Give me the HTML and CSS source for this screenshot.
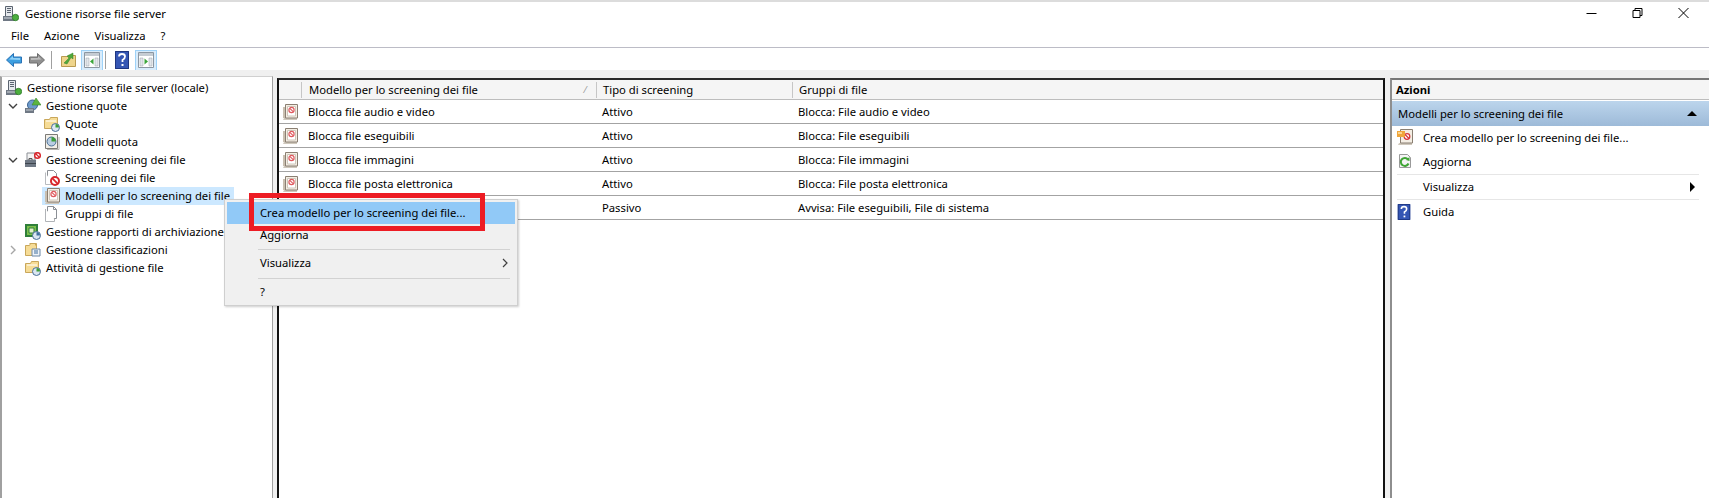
FILE: index.html
```html
<!DOCTYPE html>
<html lang="it">
<head>
    <meta charset="UTF-8">
    <title>Gestione risorse file server</title>
    <link rel="stylesheet" href="styles.css">
</head>
<body>
    <svg class="sprite" aria-hidden="true">
        <symbol id="i-server" viewBox="0 0 16 16">
            <path d="M2.500 .5h7v10h-7z" fill="#e6e9ed" stroke="#5b6470"/>
            <path d="M4 2.500h4M4 4.500h4M4 6.500h4" stroke="#5b6470"/>
            <path d="M0 10h12v5H0z" fill="#6f7884"/>
            <path d="M1 11.500h10v1H1z" fill="#d5d9de"/>
            <circle cx="12.500" cy="11.500" r="3.200" fill="#4cae3f" stroke="#2c7a26" stroke-width=".8"/>
        </symbol>
        <symbol id="i-quota" viewBox="0 0 16 16">
            <circle cx="7.500" cy="7" r="5" fill="#6d9bcc" stroke="#3b6390"/>
            <path d="M0 10h9v5H0z" fill="#6f7884"/>
            <path d="M1 11.500h7v1H1z" fill="#c9ced5"/>
            <path d="M11 0l5 7H7z" fill="#5db43f" stroke="#3b8a2b" stroke-width=".6"/>
        </symbol>
        <symbol id="i-folder-pie" viewBox="0 0 16 16">
            <path d="M.5 3.500h5l1-2h7v11H.5z" fill="#f6dc96" stroke="#c9a75a"/>
            <path d="M2 5h10" stroke="#fff"/>
            <circle cx="11.500" cy="11.500" r="4" fill="#dbe6f2" stroke="#4a6f96"/>
            <path d="M11.500 11.500V8a3.500 3.500 0 0 1 3.500 3.500z" fill="#3f9e3a"/>
        </symbol>
        <symbol id="i-page-pie" viewBox="0 0 16 16">
            <path d="M1.500 .5h12v14h-12z" fill="#f2efe8" stroke="#7c7a76"/>
            <path d="M3 15.500h12V3" fill="none" stroke="#b5b3ae"/>
            <circle cx="7.500" cy="7.500" r="4.500" fill="#b9cde2" stroke="#4a6f96"/>
            <path d="M7.500 7.500V3a4.500 4.500 0 0 1 4.500 4.500z" fill="#3f9e3a"/>
        </symbol>
        <symbol id="i-case-ban" viewBox="0 0 16 16">
            <path d="M2 1h8v7H2z" fill="#f4f4f4" stroke="#8b8f95"/>
            <path d="M4 8V6.500h3V8" fill="none" stroke="#555"/>
            <path d="M0 8h11v7H0z" fill="#6f7884"/>
            <path d="M0 11h11v1H0z" fill="#3e454e"/>
            <circle cx="12.500" cy="3.500" r="2.800" fill="#fff" stroke="#d8262c" stroke-width="1.500"/>
            <path d="M10.500 1.500l4 4" stroke="#d8262c" stroke-width="1.300"/>
        </symbol>
        <symbol id="i-page-ban" viewBox="0 0 16 16">
            <path d="M3.500 .5h6l3 3v8h-9z" fill="#fff" stroke="#8b8f95"/>
            <path d="M1.500 2.500v12h7" fill="#fff" stroke="#b9bcc0"/>
            <circle cx="11" cy="11" r="4" fill="#fff" stroke="#d8262c" stroke-width="2"/>
            <path d="M8.200 8.200l5.600 5.600" stroke="#d8262c" stroke-width="1.800"/>
        </symbol>
        <symbol id="i-template" viewBox="0 0 16 16">
            <path d="M2 14h13v2H1z" fill="#cfc8bc"/>
            <path d="M1 3h2v11H1z" fill="#c9bfb0"/>
            <path d="M3.500 .5h12v13.500h-12z" fill="#f4eee4" stroke="#8a7f72"/>
            <path d="M5.500 2.500h8v9.500h-8z" fill="#fff" stroke="#cfc7ba"/>
            <circle cx="9.500" cy="6" r="2.600" fill="#fff" stroke="#df5a5e" stroke-width="1.200"/>
            <path d="M7.800 4.300l3.400 3.400" stroke="#df5a5e" stroke-width="1.100"/>
        </symbol>
        <symbol id="i-pages" viewBox="0 0 16 16">
            <path d="M3.500 .5h6l3 3v9h-9z" fill="#fff" stroke="#8b8f95"/>
            <path d="M1.500 3v12.500h9V13" fill="#fff" stroke="#b0b3b7"/>
            <path d="M9.500 .5v3h3" fill="none" stroke="#8b8f95"/>
        </symbol>
        <symbol id="i-report" viewBox="0 0 16 16">
            <path d="M0 0h13v13H0z" fill="#2f7f3a"/>
            <path d="M2 2h9v9H2z" fill="#7cc04b"/>
            <path d="M4 4h5v5H4z" fill="#e4f1c9" stroke="#2f7f3a"/>
            <circle cx="11.500" cy="11.500" r="4" fill="#dbe6f2" stroke="#4a6f96"/>
            <path d="M11.500 11.500V8a3.500 3.500 0 0 1 3.500 3.500z" fill="#3f6f9e"/>
        </symbol>
        <symbol id="i-folder-class" viewBox="0 0 16 16">
            <path d="M.5 3.500h4l1-2h6v12H.5z" fill="#f6dc96" stroke="#c9a75a"/>
            <path d="M4.500 1.500h6v2" fill="none" stroke="#c9a75a"/>
            <path d="M7 7h8v7H7z" fill="#eef3f8" stroke="#6c88a6"/>
            <path d="M9 9h4M9 11h4" stroke="#3f6f9e"/>
        </symbol>
        <symbol id="i-refresh" viewBox="0 0 16 16">
            <path d="M2.500 1.500h8l3 3v10h-11z" fill="#f4f4f4" stroke="#9a9a9a"/>
            <path d="M11 6.500a4 4 0 1 0 .5 4" fill="none" stroke="#3fa535" stroke-width="2"/>
            <path d="M9 7l3.500-3v4z" fill="#3fa535"/>
        </symbol>
        <symbol id="i-new-template" viewBox="0 0 16 16">
            <path d="M2 14h13v2H1z" fill="#cfc8bc"/>
            <path d="M3.500 .5h12v13.500h-12z" fill="#f4eee4" stroke="#8a7f72"/>
            <circle cx="10" cy="7.500" r="2.800" fill="#fff" stroke="#d8363c" stroke-width="1.300"/>
            <path d="M8 5.500l4 4" stroke="#d8363c" stroke-width="1.200"/>
            <path d="M0 2h8v6H0z" fill="#f0a63c"/>
            <path d="M1 3h4v2H1z" fill="#fbd68e"/>
        </symbol>
        <symbol id="i-help" viewBox="0 0 14 18">
            <path d="M0 0h14v18H0z" fill="#3556b4"/>
            <path d="M.5 .5h13v17H.5z" fill="none" stroke="#1f3680"/>
            <path d="M4 5.500Q4 3 7 3t3 2.500Q10 7.500 7.500 9v2" fill="none" stroke="#fff" stroke-width="1.800"/>
            <path d="M6.500 13h2v2h-2z" fill="#fff"/>
        </symbol>
        <symbol id="i-back" viewBox="0 0 16 14">
            <path d="M7.500 .5L.5 7l7 6.500V10H15.500V4H7.500z" fill="#3d9fe0" stroke="#2a72b5"/>
            <path d="M3 6.500l4-3.500v2h7v2z" fill="#8ed0f7"/>
        </symbol>
        <symbol id="i-forward" viewBox="0 0 16 14">
            <path d="M8.500 .5l7 6.500-7 6.500V10H.5V4h8z" fill="#8f8f8f" stroke="#6e6e6e"/>
            <path d="M2 5h7V3l3.500 3.500L2 7z" fill="#bdbdbd"/>
        </symbol>
        <symbol id="i-up" viewBox="0 0 16 16">
            <path d="M.5 4.500h6l1-1h7v11H.5z" fill="#efd58c" stroke="#b99a50"/>
            <path d="M3 11l5-5-2-2 6-3v6l-2-1.500L6 12z" fill="#4fa83a" stroke="#35812a" stroke-width=".5"/>
        </symbol>
        <symbol id="i-pane-left" viewBox="0 0 16 16">
            <path d="M.5 .5h15v15H.5z" fill="#fff" stroke="#8c97a2"/>
            <path d="M1 1h14v3H1z" fill="#c5ccd3"/>
            <path d="M2 6h3v8H2zM11 6h3v8h-3z" fill="#e2e6ea" stroke="#9aa2aa" stroke-width=".5"/>
            <path d="M9.500 6.500v6L6 9.500z" fill="#3ba53a"/>
        </symbol>
        <symbol id="i-pane-right" viewBox="0 0 16 16">
            <path d="M.5 .5h15v15H.5z" fill="#fff" stroke="#8c97a2"/>
            <path d="M1 1h14v3H1z" fill="#c5ccd3"/>
            <path d="M2 6h3v8H2zM11 6h3v8h-3z" fill="#e2e6ea" stroke="#9aa2aa" stroke-width=".5"/>
            <path d="M6.500 6.500v6L10 9.500z" fill="#3ba53a"/>
        </symbol>
        <symbol id="i-chev-down" viewBox="0 0 10 6">
            <path d="M1 1l4 4 4-4" fill="none" stroke="#404040" stroke-width="1.400"/>
        </symbol>
        <symbol id="i-chev-right" viewBox="0 0 6 10">
            <path d="M1 1l4 4-4 4" fill="none" stroke="#a6a6a6" stroke-width="1.400"/>
        </symbol>
    </svg>

    <div class="window">
        <header class="titlebar">
            <svg class="icon"><use href="#i-server"/></svg>
            <span class="title">Gestione risorse file server</span>
            <div class="win-controls">
                <svg class="win-btn" viewBox="0 0 10 10"><path d="M0 5.500h10" stroke="#000"/></svg>
                <svg class="win-btn" viewBox="0 0 10 10"><path d="M.5 2.500h7v7h-7zM2.500 2.500v-2h7v7h-2" fill="none" stroke="#000"/></svg>
                <svg class="win-btn" viewBox="0 0 10 10"><path d="M0 0l10 10M10 0L0 10" stroke="#000"/></svg>
            </div>
        </header>

        <nav class="menubar">
            <span class="menu-item">File</span>
            <span class="menu-item">Azione</span>
            <span class="menu-item">Visualizza</span>
            <span class="menu-item">?</span>
        </nav>

        <div class="toolbar">
            <svg class="tool tool-back"><use href="#i-back"/></svg>
            <svg class="tool tool-fwd"><use href="#i-forward"/></svg>
            <span class="tool-sep"></span>
            <svg class="tool tool-up"><use href="#i-up"/></svg>
            <span class="tool-toggle"><svg class="icon"><use href="#i-pane-left"/></svg></span>
            <span class="tool-sep tool-sep-b"></span>
            <svg class="tool tool-help"><use href="#i-help"/></svg>
            <span class="tool-toggle tool-toggle-b"><svg class="icon"><use href="#i-pane-right"/></svg></span>
        </div>

        <main class="panes">
            <aside class="tree-pane">
                <div class="tree-row lvl-0"><svg class="icon"><use href="#i-server"/></svg><span>Gestione risorse file server (locale)</span></div>
                <div class="tree-row lvl-1"><svg class="chev-d"><use href="#i-chev-down"/></svg><svg class="icon"><use href="#i-quota"/></svg><span>Gestione quote</span></div>
                <div class="tree-row lvl-2"><svg class="icon"><use href="#i-folder-pie"/></svg><span>Quote</span></div>
                <div class="tree-row lvl-2"><svg class="icon"><use href="#i-page-pie"/></svg><span>Modelli quota</span></div>
                <div class="tree-row lvl-1"><svg class="chev-d"><use href="#i-chev-down"/></svg><svg class="icon"><use href="#i-case-ban"/></svg><span>Gestione screening dei file</span></div>
                <div class="tree-row lvl-2"><svg class="icon"><use href="#i-page-ban"/></svg><span>Screening dei file</span></div>
                <div class="tree-row lvl-2 selected"><svg class="icon"><use href="#i-template"/></svg><span>Modelli per lo screening dei file</span></div>
                <div class="tree-row lvl-2"><svg class="icon"><use href="#i-pages"/></svg><span>Gruppi di file</span></div>
                <div class="tree-row lvl-1"><span class="chev-gap"></span><svg class="icon"><use href="#i-report"/></svg><span>Gestione rapporti di archiviazione</span></div>
                <div class="tree-row lvl-1"><svg class="chev-r"><use href="#i-chev-right"/></svg><svg class="icon"><use href="#i-folder-class"/></svg><span>Gestione classificazioni</span></div>
                <div class="tree-row lvl-1"><span class="chev-gap"></span><svg class="icon"><use href="#i-folder-pie"/></svg><span>Attività di gestione file</span></div>
            </aside>

            <section class="list-pane">
                <div class="list-head">
                    <div class="col col-icon"></div>
                    <div class="col col-name">Modello per lo screening dei file<span class="sort">⁄</span></div>
                    <div class="col col-type">Tipo di screening</div>
                    <div class="col col-group">Gruppi di file</div>
                </div>
                <div class="list-row">
                    <div class="cell col-icon"><svg class="icon"><use href="#i-template"/></svg></div>
                    <div class="cell col-name">Blocca file audio e video</div>
                    <div class="cell col-type">Attivo</div>
                    <div class="cell col-group">Blocca: File audio e video</div>
                </div>
                <div class="list-row">
                    <div class="cell col-icon"><svg class="icon"><use href="#i-template"/></svg></div>
                    <div class="cell col-name">Blocca file eseguibili</div>
                    <div class="cell col-type">Attivo</div>
                    <div class="cell col-group">Blocca: File eseguibili</div>
                </div>
                <div class="list-row">
                    <div class="cell col-icon"><svg class="icon"><use href="#i-template"/></svg></div>
                    <div class="cell col-name">Blocca file immagini</div>
                    <div class="cell col-type">Attivo</div>
                    <div class="cell col-group">Blocca: File immagini</div>
                </div>
                <div class="list-row">
                    <div class="cell col-icon"><svg class="icon"><use href="#i-template"/></svg></div>
                    <div class="cell col-name">Blocca file posta elettronica</div>
                    <div class="cell col-type">Attivo</div>
                    <div class="cell col-group">Blocca: File posta elettronica</div>
                </div>
                <div class="list-row">
                    <div class="cell col-icon"></div>
                    <div class="cell col-name"></div>
                    <div class="cell col-type">Passivo</div>
                    <div class="cell col-group">Avvisa: File eseguibili, File di sistema</div>
                </div>
            </section>

            <aside class="actions-pane">
                <div class="actions-head">Azioni</div>
                <div class="actions-band"><span>Modelli per lo screening dei file</span><span class="tri-up"></span></div>
                <div class="action-row lift"><svg class="icon"><use href="#i-new-template"/></svg><span>Crea modello per lo screening dei file...</span></div>
                <div class="action-row lift line-below"><svg class="icon"><use href="#i-refresh"/></svg><span>Aggiorna</span></div>
                <div class="action-row line-below"><span class="icon"></span><span>Visualizza</span><span class="tri-right"></span></div>
                <div class="action-row"><svg class="icon icon-help"><use href="#i-help"/></svg><span>Guida</span></div>
            </aside>
        </main>
    </div>

    <div class="context-menu">
        <div class="ctx-item hot">Crea modello per lo screening dei file...</div>
        <div class="ctx-item">Aggiorna</div>
        <div class="ctx-sep"></div>
        <div class="ctx-item">Visualizza<svg class="ctx-arrow" viewBox="0 0 6 10"><path d="M1 1l4 4-4 4" fill="none" stroke="#404040" stroke-width="1.200"/></svg></div>
        <div class="ctx-sep ctx-sep-b"></div>
        <div class="ctx-item">?</div>
    </div>
    <div class="red-box"></div>
</body>
</html>
```

FILE: styles.css
```css
:root {
    --pane-line: #a0a0a0;
    --row-line: #a3a3a3;
    --face: #f0f0f0;
    --text: #000;
}
html, body {
    margin: 0;
    padding: 0;
    height: 100%;
    overflow: hidden;
}
body {
    font-family: "Noto Sans", "Open Sans", sans-serif;
    font-size: 11.25px;
    color: var(--text);
    background: #fff;
}
.sprite {
    position: absolute;
    width: 0;
    height: 0;
}
.icon {
    width: 16px;
    height: 16px;
    flex: none;
}
.window {
    height: 498px;
    display: flex;
    flex-direction: column;
    border-top: 2px solid #dcdcdc;
    box-sizing: border-box;
}

/* title + menu */
.titlebar {
    height: 24px;
    display: flex;
    align-items: center;
    padding-left: 3px;
}
.title {
    margin-left: 6px;
    padding-bottom: 2px;
}
.win-controls {
    margin-left: auto;
    display: flex;
    gap: 35px;
    padding-right: 20px;
    margin-top: -2px;
}
.win-btn {
    width: 11px;
    height: 10px;
}
.menubar {
    height: 22px;
    box-sizing: border-box;
    display: flex;
    align-items: center;
    padding: 0 0 2px 11px;
    gap: 15px;
    border-bottom: 1px solid #bcbcc6;
}

/* toolbar */
.toolbar {
    height: 22px;
    box-sizing: border-box;
    display: flex;
    align-items: center;
    padding: 2px 0 0 6px;
    background: #fff;
}
.tool {
    flex: none;
    width: 16px;
    height: 14px;
}
.tool-fwd {
    margin-left: 7px;
}
.tool-sep {
    width: 1px;
    height: 18px;
    background: #a0a0a0;
    margin-left: 6px;
}
.tool-up {
    margin-left: 9px;
    height: 16px;
}
.tool-toggle {
    display: flex;
    align-items: center;
    justify-content: center;
    width: 22px;
    height: 21px;
    margin-left: 4px;
    background: #d9ecfb;
    border: 1px solid #9ed2f8;
    box-sizing: border-box;
}
.tool-sep-b {
    margin-left: 2px;
}
.tool-help {
    margin-left: 9px;
    width: 14px;
    height: 18px;
}
.tool-toggle-b {
    margin-left: 6px;
}

/* three panes */
.panes {
    flex: 1;
    min-height: 0;
    display: flex;
    background: var(--face);
    padding-top: 6px;
}
.tree-pane {
    width: 270px;
    flex: none;
    background: #fff;
    border: 1px solid var(--pane-line);
    border-left-width: 2px;
    border-bottom: none;
    border-top-color: #d0d0d0;
    padding-top: 2px;
}
.tree-row {
    height: 18px;
    display: flex;
    align-items: center;
    white-space: nowrap;
}
.tree-row > span:last-child {
    margin-left: 5px;
    padding-bottom: 2px;
}
.lvl-0 {
    padding-left: 4px;
}
.lvl-1 {
    padding-left: 6px;
}
.lvl-2 {
    padding-left: 42px;
}
.chev-d {
    width: 10px;
    height: 6px;
    margin-right: 7px;
}
.chev-r {
    width: 6px;
    height: 10px;
    margin: 0 9px 0 2px;
}
.chev-gap {
    width: 17px;
    flex: none;
}
.selected {
    margin-left: 40px;
    padding-left: 2px;
    width: 190px;
    background: #cce8ff;
}
.list-pane {
    flex: 1;
    margin: 2px 0 0 4px;
    background: #fff;
    border: 2px solid #111;
    border-top-color: #2a2a2a;
    border-bottom: none;
}
.list-head,
.list-row {
    display: flex;
    align-items: center;
    white-space: nowrap;
}
.list-head {
    height: 19px;
    background: #f5f5f5;
    border-bottom: 1px solid #bdbdbd;
}
.list-row {
    height: 23px;
    border-bottom: 1px solid var(--row-line);
}
.col-icon {
    width: 22px;
    flex: none;
}
.col-name {
    width: 295px;
    flex: none;
    position: relative;
}
.col-type {
    width: 196px;
    flex: none;
}
.col-group {
    flex: 1;
}
.col {
    height: 16px;
    line-height: 16px;
    box-sizing: border-box;
    padding-left: 6px;
    border-left: 1px solid #c6c6c6;
}
.col.col-icon {
    border-left: none;
}
.col.col-name {
    padding-left: 7px;
}
.cell {
    padding-left: 6px;
    box-sizing: border-box;
}
.cell.col-name {
    padding-left: 7px;
}
.cell.col-icon {
    padding-left: 3px;
    display: flex;
}
.sort {
    position: absolute;
    right: 10px;
    top: 0;
    color: #8a8a8a;
    font-size: 9px;
}
.actions-pane {
    width: 319px;
    flex: none;
    margin: 2px 0 0 5px;
    background: #fff;
    border-left: 2px solid #8e8e8e;
    border-top: 2px solid #777;
    box-sizing: border-box;
}
.actions-head {
    height: 19px;
    line-height: 19px;
    padding-left: 4px;
    font-weight: 700;
    background: #f5f5f5;
    border-bottom: 1px solid #bdbdbd;
}
.actions-band {
    margin-top: 1px;
    height: 25px;
    display: flex;
    align-items: center;
    justify-content: space-between;
    padding: 0 12px 0 6px;
    background: linear-gradient(#bcd5ec, #9dbad8);
}
.tri-up {
    width: 0;
    height: 0;
    border: 5px solid transparent;
    border-top: none;
    border-bottom: 5px solid #000;
}
.action-row {
    height: 24.500px;
    margin: 0 10px 0 5px;
    display: flex;
    align-items: center;
    gap: 10px;
    box-sizing: border-box;
}
.action-row.lift {
    padding-bottom: 2px;
}
.line-below {
    border-bottom: 1px solid #e6e6e6;
}
.icon-help {
    width: 14px;
    height: 16px;
    margin-right: 2px;
}
.tri-right {
    margin-left: auto;
    margin-right: 4px;
    width: 0;
    height: 0;
    border: 5px solid transparent;
    border-right: none;
    border-left: 5px solid #000;
}

/* popup over the panes */
.context-menu {
    position: absolute;
    left: 224px;
    top: 199px;
    width: 294px;
    height: 107px;
    box-sizing: border-box;
    padding: 2px;
    background: var(--face);
    border: 1px solid #cfcfcf;
    box-shadow: 1px 1px 2px rgba(0, 0, 0, 0.2);
}
.ctx-item {
    height: 22px;
    box-sizing: border-box;
    display: flex;
    align-items: center;
    padding: 0 0 2px 33px;
    position: relative;
}
.hot {
    background: #91c9f7;
}
.ctx-sep {
    height: 1px;
    margin: 3px 5px 2px 31px;
    background: #d2d2d2;
}
.ctx-sep-b {
    margin: 4px 5px 2px 31px;
}
.ctx-arrow {
    position: absolute;
    right: 7px;
    top: 6px;
    width: 6px;
    height: 10px;
}
.red-box {
    position: absolute;
    left: 249px;
    top: 193px;
    width: 236px;
    height: 38px;
    box-sizing: border-box;
    border: 5px solid #ed1c24;
}
```
